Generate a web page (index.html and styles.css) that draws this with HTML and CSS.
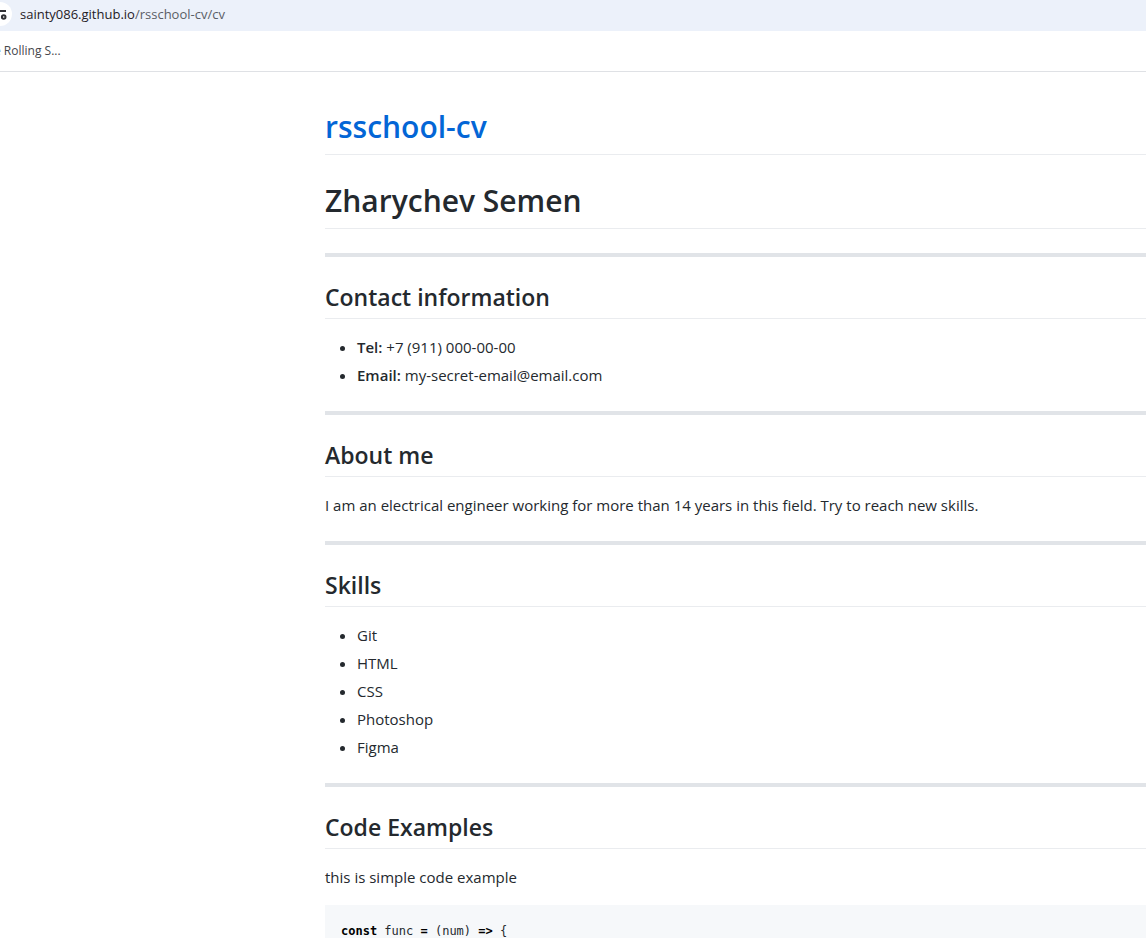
FILE: index.html
```
<!DOCTYPE html>
<html lang="en">
<head>
<meta charset="utf-8">
<title>rsschool-cv</title>
<link rel="stylesheet" href="styles.css">
</head>
<body>
<header class="browser">
  <div class="address">
    <button class="site-info" type="button" aria-label="Site information">
      <svg class="tune" viewBox="0 0 16 16" aria-hidden="true">
        <circle cx="4" cy="4" r="2"/>
        <path d="M8 4h6M2 10h6"/>
        <circle cx="11.7" cy="10" r="1.8"/>
      </svg>
    </button>
    <span class="url">sainty086.github.io<span class="path">/rsschool-cv/cv</span></span>
  </div>
  <nav class="bookmarks"><a class="bookmark" href="#">e Rolling S...</a></nav>
</header>
<main class="markdown">
  <h1><a class="home" href="#">rsschool-cv</a></h1>
  <h1>Zharychev Semen</h1>
  <hr>
  <h2>Contact information</h2>
  <ul>
    <li><strong>Tel:</strong> +7 (911) 000-00-00</li>
    <li><strong>Email:</strong> my-secret-email@email.com</li>
  </ul>
  <hr>
  <h2>About me</h2>
  <p>I am an electrical engineer working for more than 14 years in this field. Try to reach new skills.</p>
  <hr>
  <h2>Skills</h2>
  <ul>
    <li>Git</li>
    <li>HTML</li>
    <li>CSS</li>
    <li>Photoshop</li>
    <li>Figma</li>
  </ul>
  <hr>
  <h2>Code Examples</h2>
  <p>this is simple code example</p>
  <pre><code><b>const</b> func <b>=</b> (num) <b>=&gt;</b> {</code></pre>
</main>
</body>
</html>
```
FILE: styles.css
```
* { box-sizing: border-box; }
html { height: 100%; overflow: hidden; }
body {
  height: 100%;
  margin: 0;
  overflow: hidden;
  background: #fff;
  color: #24292e;
  font: 15px/24px "Segoe UI", "Open Sans", sans-serif;
}
.browser { border-bottom: 1px solid #dfe1e5; }
.address {
  display: flex;
  align-items: center;
  gap: 8px;
  height: 31px;
  padding-bottom: 3px;
  background: #ecf1fa;
  color: #1f2024;
  font-size: 13px;
}
.site-info {
  display: flex;
  align-items: center;
  justify-content: flex-end;
  width: 24px;
  height: 24px;
  margin-left: -12px;
  padding: 2px 4px 0 0;
  border: 0;
  border-radius: 50%;
  background: #fff;
}
.tune {
  flex: none;
  width: 16px;
  height: 16px;
  fill: none;
  stroke: #303134;
  stroke-width: 2;
}
.path { color: #5a5e66; }
.bookmarks {
  display: flex;
  align-items: center;
  height: 40px;
  margin-left: -6px;
}
.bookmark {
  color: #45474b;
  font-size: 12px;
  text-decoration: none;
}
.markdown { padding: 33px 0 0 325px; }
h1, h2 {
  margin: 24px 0 16px;
  border-bottom: 1px solid #eaecef;
  font-weight: 600;
}
h1 { padding-bottom: 5px; font-size: 30px; line-height: 44px; }
h2 { padding-bottom: 5px; font-size: 23px; line-height: 32px; }
h1:first-child { margin-top: 0; }
.home { color: #0366d6; text-decoration: none; }
hr {
  height: 4px;
  margin: 24px 0;
  border: 0;
  background: #e1e4e8;
}
p, ul { margin: 0 0 16px; }
ul { padding-left: 32px; }
li + li { margin-top: 4px; }
strong { font-weight: 600; }
pre {
  margin: 0;
  padding: 16px;
  background: #f6f8fa;
  font: 12px/20px "DejaVu Sans Mono", monospace;
}
code { font: inherit; }
b { color: #000; }
```
